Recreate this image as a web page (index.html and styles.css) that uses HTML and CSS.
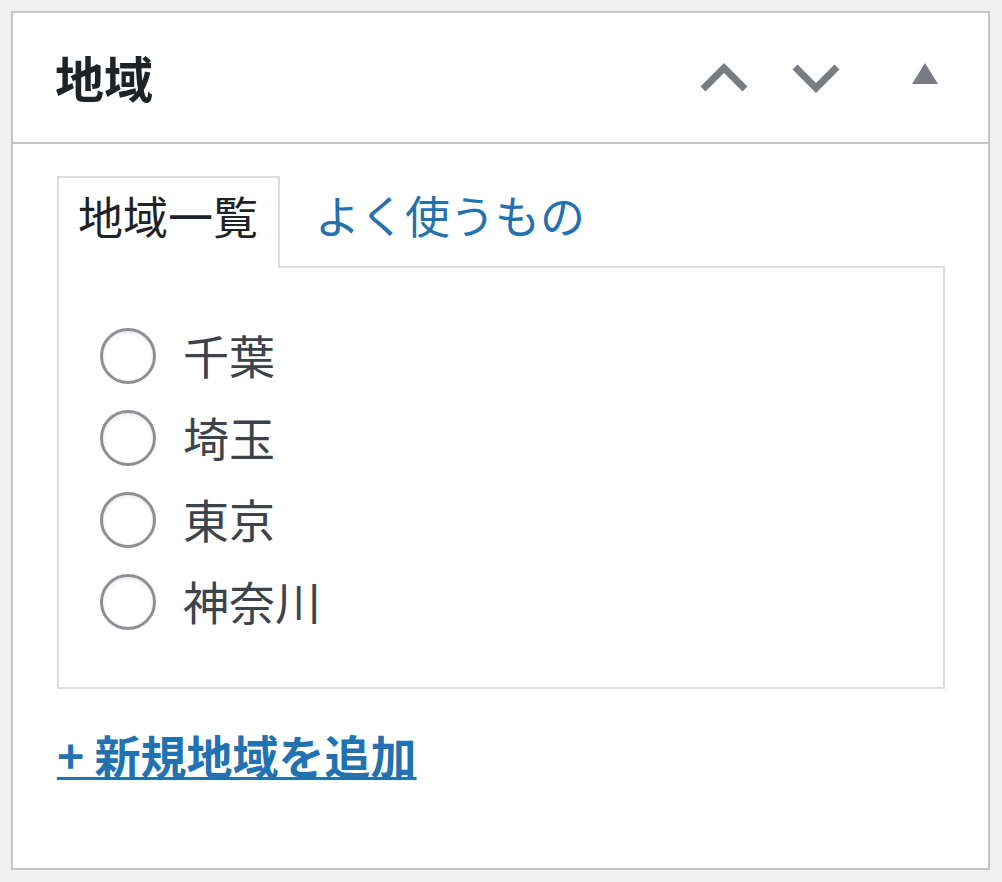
FILE: index.html
```html
<!DOCTYPE html>
<html lang="ja">
<head>
    <meta charset="UTF-8">
    <title>地域</title>
    <link rel="stylesheet" href="styles.css">
</head>
<body>
    <div class="postbox">
        <div class="postbox-header">
            <h2 class="hndle">地域</h2>
            <button class="handle-btn btn-up" aria-label="上へ移動">
                <svg width="48" height="30" viewBox="0 0 48 30"><polyline points="3,26 24,5 45,26" fill="none" stroke="#787c82" stroke-width="7"/></svg>
            </button>
            <button class="handle-btn btn-down" aria-label="下へ移動">
                <svg width="48" height="30" viewBox="0 0 48 30"><polyline points="3,4 24,25 45,4" fill="none" stroke="#787c82" stroke-width="7"/></svg>
            </button>
            <button class="handle-btn btn-toggle" aria-label="パネルを切り替え">
                <svg width="26" height="22" viewBox="0 0 26 22"><polygon points="13,0 26,21 0,21" fill="#787c82"/></svg>
            </button>
        </div>
        <div class="inside">
            <ul class="category-tabs">
                <li class="tabs">地域一覧</li>
                <li class="hide-if-no-js"><a href="#">よく使うもの</a></li>
            </ul>
            <div class="tabs-panel">
                <ul class="checklist">
                    <li><span class="radio"></span><span class="label">千葉</span></li>
                    <li><span class="radio"></span><span class="label">埼玉</span></li>
                    <li><span class="radio"></span><span class="label">東京</span></li>
                    <li><span class="radio"></span><span class="label">神奈川</span></li>
                </ul>
            </div>
            <a class="add-new" href="#">+ 新規地域を追加</a>
        </div>
    </div>
</body>
</html>
```

FILE: styles.css
```css
*{
    box-sizing: border-box;
}
body{
    margin: 0;
    background-color: #f0f0f1;
    font-family: "Noto Sans CJK JP", "Noto Sans", sans-serif;
    color: #3c434a;
}
.postbox{
    margin: 11px 12px 0 11px;
    height: 859px;
    border: 2px solid #c3c4c7;
    background-color: #fff;
}
.postbox-header{
    display: flex;
    align-items: center;
    height: 131px;
    border-bottom: 2px solid #c3c4c7;
    padding-left: 42px;
}
.hndle{
    flex: 1;
    margin: 0;
    font-size: 49px;
    font-weight: 700;
    color: #1d2327;
    line-height: 1;
    padding-bottom: 2px;
}
.handle-btn{
    border: 0;
    background: none;
    padding: 0;
    display: flex;
    justify-content: center;
    align-items: center;
    height: 72px;
    width: 92px;
}
.btn-toggle{
    width: 126px;
    padding-bottom: 8px;
}
.inside{
    padding: 32px 43px 0 44px;
}
.category-tabs{
    display: flex;
    list-style: none;
    margin: 0 0 -2px;
    padding: 0;
    position: relative;
    z-index: 1;
}
.category-tabs li{
    height: 92px;
    font-size: 45px;
    line-height: 1;
    display: flex;
    align-items: center;
    padding: 0 20px 16px 19px;
}
.category-tabs .tabs{
    border: 2px solid #dcdcde;
    border-bottom: 0;
    background-color: #fff;
    color: #1d2327;
}
.category-tabs a{
    color: #2271b1;
    text-decoration: none;
    margin-left: 16px;
}
.tabs-panel{
    border: 2px solid #dcdcde;
    height: 423px;
    padding: 47px 0 0 41px;
}
.checklist{
    list-style: none;
    margin: 0;
    padding: 0;
}
.checklist li{
    display: flex;
    align-items: center;
    height: 82px;
}
.radio{
    width: 56px;
    height: 56px;
    border: 3px solid #8c8f94;
    border-radius: 50%;
    box-shadow: inset 0 2px 4px rgba(0,0,0,.08);
    margin-right: 27px;
}
.label{
    font-size: 46px;
    line-height: 1;
    padding-bottom: 4px;
}
.add-new{
    display: inline-block;
    margin-top: 38px;
    font-size: 46px;
    font-weight: 700;
    color: #2271b1;
    text-decoration: underline;
    text-decoration-thickness: 3px;
    text-underline-offset: 3px;
    line-height: 1.2;
}
```
